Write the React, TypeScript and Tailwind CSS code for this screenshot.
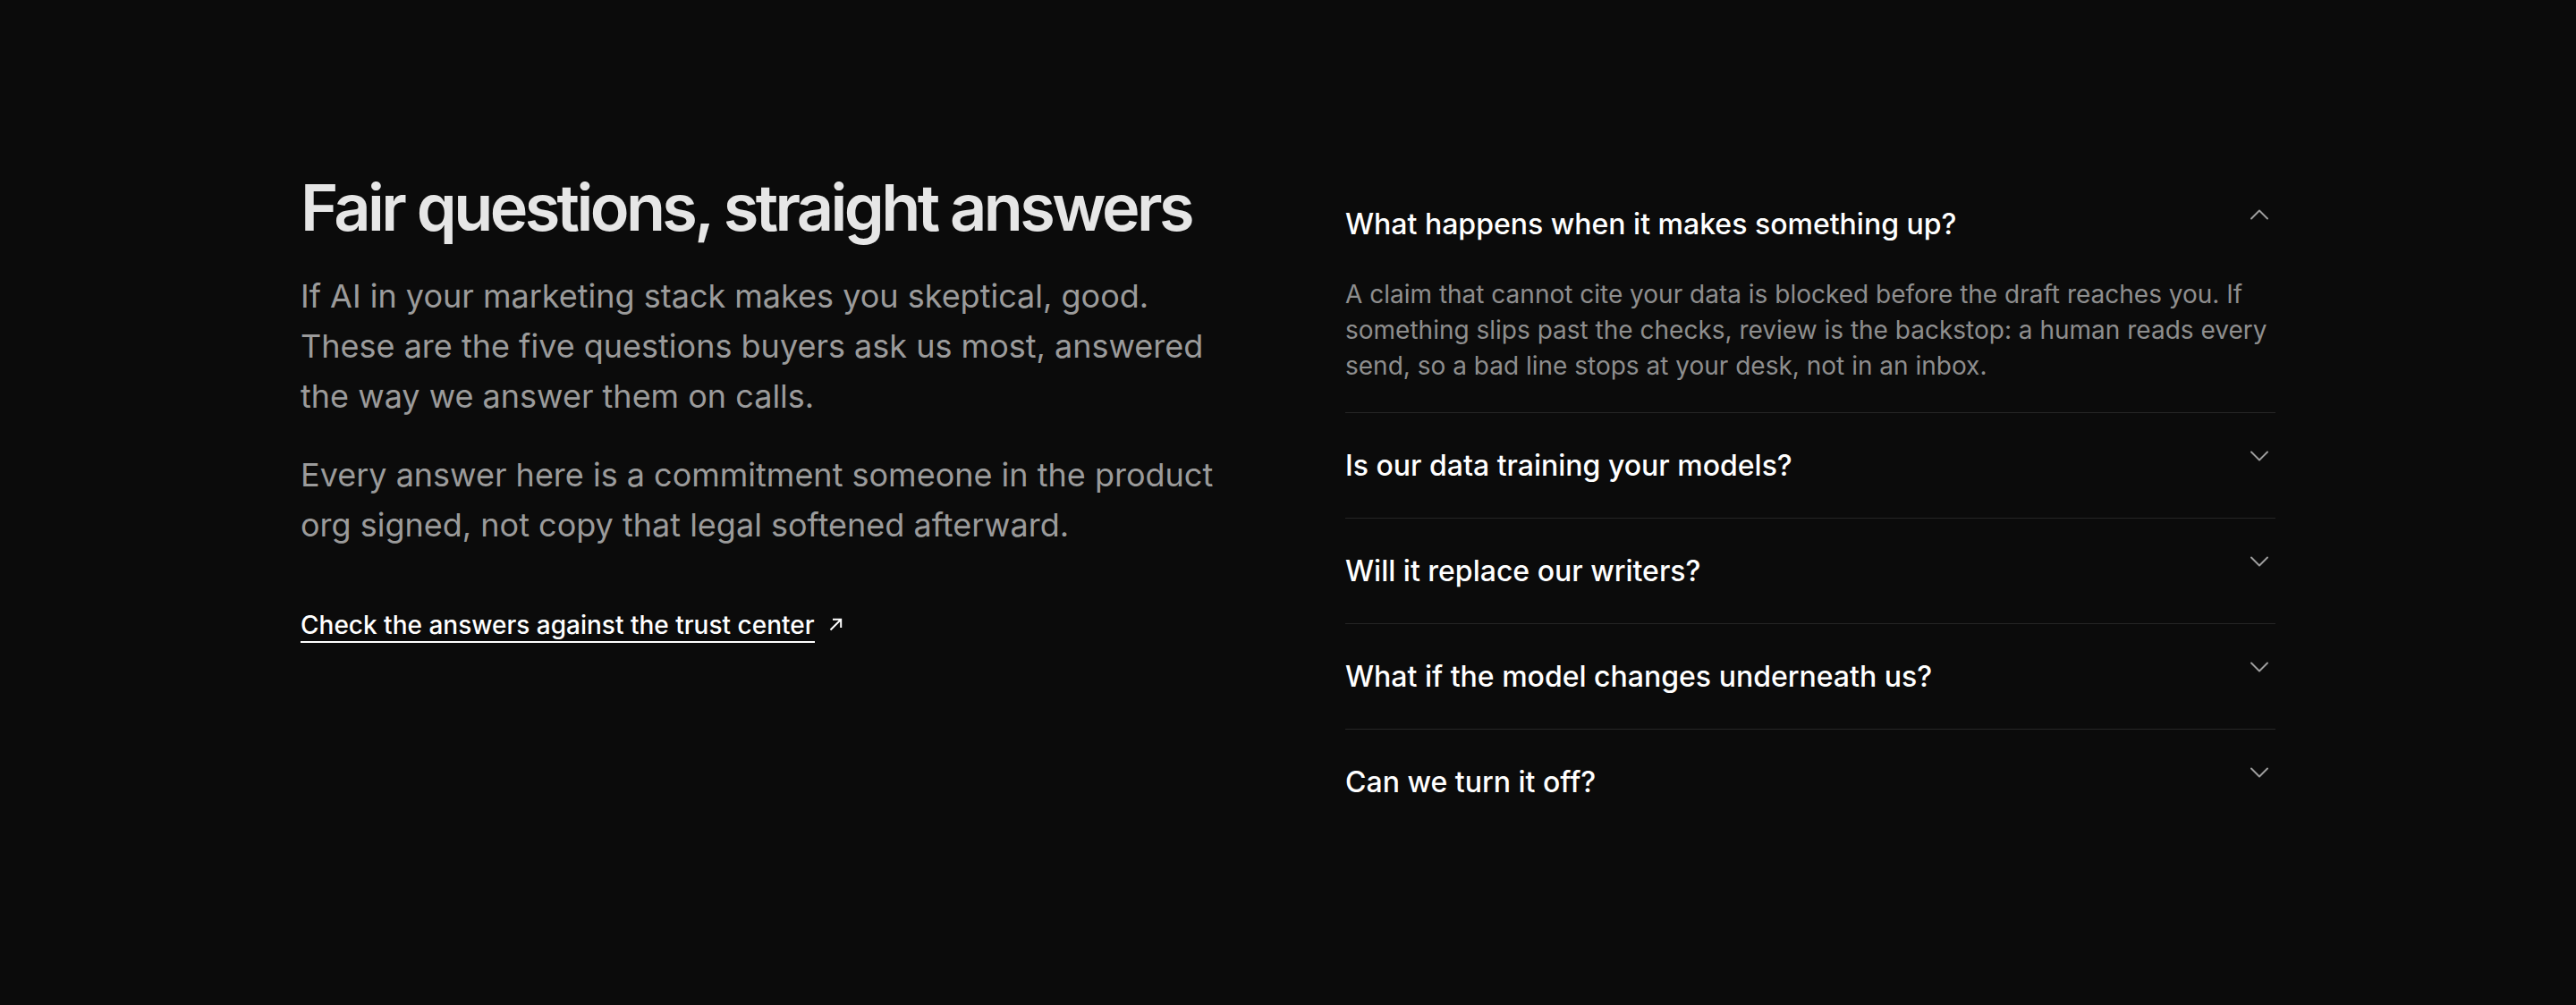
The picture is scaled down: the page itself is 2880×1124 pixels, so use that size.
import { ChevronDown, ChevronUp } from 'lucide-react'

const faqs = [
  {
    q: 'What happens when it makes something up?',
    a: 'A claim that cannot cite your data is blocked before the draft reaches you. If something slips past the checks, review is the backstop: a human reads every send, so a bad line stops at your desk, not in an inbox.',
    open: true,
  },
  { q: 'Is our data training your models?', a: '', open: false },
  { q: 'Will it replace our writers?', a: '', open: false },
  { q: 'What if the model changes underneath us?', a: '', open: false },
  { q: 'Can we turn it off?', a: '', open: false },
]

export default function App() {
  return (
    <div className="min-h-[1124px] bg-[#0b0b0b] font-['Inter',sans-serif] antialiased">
      <section className="mx-auto grid w-[2208px] grid-cols-2 gap-[128px] py-[192px]">
        <div>
          <h2 className="text-[72px] font-semibold leading-[1.1] tracking-[-0.05em] text-[#e6e6e6]">
            Fair questions, straight answers
          </h2>
          <p className="mt-8 text-[36px] leading-[56px] text-[#9b9b9b]">
            If AI in your marketing stack makes you skeptical, good. These are the five questions buyers ask us most, answered the way we answer them on calls.
          </p>
          <p className="mt-8 text-[36px] leading-[56px] text-[#9b9b9b]">
            Every answer here is a commitment someone in the product org signed, not copy that legal softened afterward.
          </p>
          <a href="#" className="mt-[66px] inline-flex items-center text-[28px] font-medium leading-[42px] text-white">
            <span className="border-b-2 border-white leading-[36px]">Check the answers against the trust center</span>
            <svg className="ml-4 -mt-1 h-[15px] w-[15px]" viewBox="0 0 15 15" fill="none" stroke="currentColor" strokeWidth={2}>
              <path d="M1.5 13.5 13 2M4 1.8h9.2V11" />
            </svg>
          </a>
        </div>

        <div>
          {faqs.map((f, i) => (
            <div key={f.q} className={i < faqs.length - 1 ? 'border-b border-[#262626]' : ''}>
              <button className="flex w-full items-start justify-between py-9 text-left">
                <span className="text-[32px] font-medium leading-[45px] text-white">{f.q}</span>
                <span className="-mt-1.5 text-[#9e9e9e]">
                  {f.open ? (
                    <ChevronUp className="h-9 w-9" strokeWidth={1.3} />
                  ) : (
                    <ChevronDown className="h-9 w-9" strokeWidth={1.3} />
                  )}
                </span>
              </button>
              {f.open && (
                <p className="pb-8 text-[28px] leading-[40px] text-[#8e8e8e]">{f.a}</p>
              )}
            </div>
          ))}
        </div>
      </section>
    </div>
  )
}
